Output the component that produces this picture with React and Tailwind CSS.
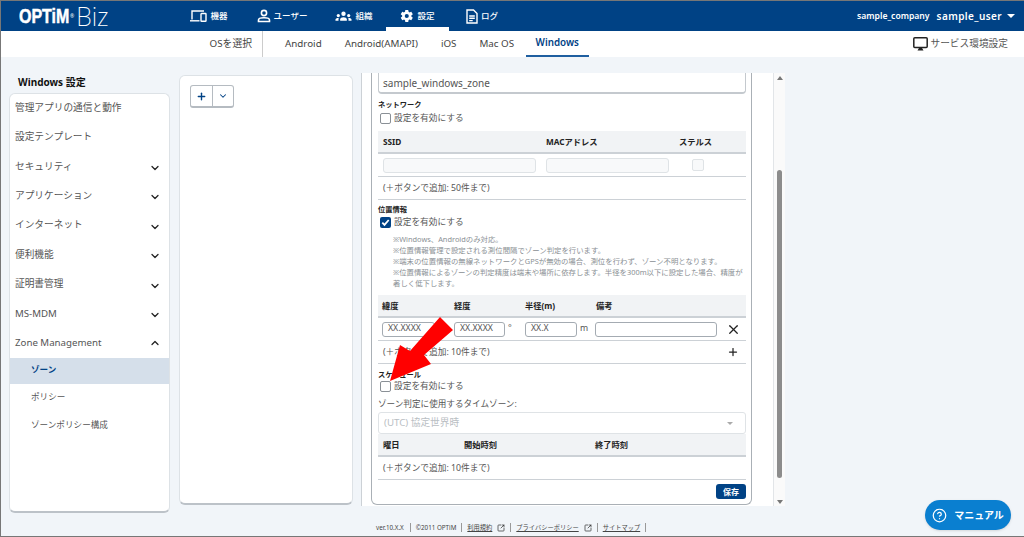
import React from "react";
import { ChevronDown, ChevronUp, Plus, X, CircleHelp, SquareArrowOutUpRight } from "lucide-react";

const font = "[font-family:'Noto_Sans','Noto_Sans_CJK_JP',sans-serif]";

function DeviceIcon() {
  return (
    <svg width="17" height="12" viewBox="0 0 17 12" fill="none" stroke="white" strokeWidth="1.4">
      <path d="M2 9.500V1H14" />
      <path d="M0 10.800H9.500" />
      <rect x="11" y="3.500" width="5" height="7.800" rx="0.6" />
    </svg>
  );
}

function UserIcon() {
  return (
    <svg width="14" height="14" viewBox="0 0 14 14" fill="none" stroke="white" strokeWidth="1.6">
      <circle cx="7" cy="4" r="2.6" />
      <path d="M1.500 12.500V11c0-1.200 2.500-2.200 5.500-2.200s5.500 1 5.500 2.200v1.500z" />
    </svg>
  );
}

function GroupIcon() {
  return (
    <svg width="17" height="11" viewBox="0 0 18 11" fill="white">
      <circle cx="9" cy="2.600" r="2.300" />
      <circle cx="3.500" cy="4.500" r="1.700" />
      <circle cx="14.500" cy="4.500" r="1.700" />
      <path d="M5.500 10V8.500c0-1.400 1.600-2.300 3.500-2.300s3.500.9 3.500 2.300V10z" />
      <path d="M0.500 10V8.800c0-.9 1.200-1.600 3-1.600l.6.100c-.3.400-.4.800-.4 1.200V10z" />
      <path d="M17.500 10V8.800c0-.9-1.200-1.600-3-1.600l-.6.100c.3.400.4.800.4 1.200V10z" />
    </svg>
  );
}

function GearIcon() {
  return (
    <svg width="14" height="14" viewBox="0 0 24 24" fill="white">
      <path d="M19.400 13c.1-.3.100-.7.100-1s0-.7-.1-1l2.200-1.700c.2-.2.200-.4.100-.6l-2.100-3.600c-.1-.2-.4-.3-.6-.2l-2.600 1c-.5-.4-1.100-.7-1.800-1l-.4-2.700c0-.2-.2-.4-.5-.4h-4.200c-.3 0-.5.200-.5.400l-.4 2.700c-.6.300-1.200.6-1.800 1l-2.600-1c-.2-.1-.5 0-.6.200L1.500 8.700c-.1.200-.1.400.1.600L3.800 11c-.1.300-.1.700-.1 1s0 .7.100 1l-2.200 1.700c-.2.200-.2.400-.1.600l2.100 3.600c.1.200.4.300.6.200l2.600-1c.5.400 1.100.7 1.800 1l.4 2.700c0 .2.200.4.500.4h4.200c.3 0 .5-.2.500-.4l.4-2.700c.6-.3 1.200-.6 1.800-1l2.600 1c.2.100.5 0 .6-.2l2.100-3.600c.1-.2.100-.4-.1-.6zM11.600 15.500a3.500 3.500 0 1 1 0-7 3.500 3.500 0 0 1 0 7z" />
    </svg>
  );
}

function LogIcon() {
  return (
    <svg width="12" height="15" viewBox="0 0 12 15" fill="none" stroke="white" strokeWidth="1.400">
      <path d="M1 1h6.500L11 4.500V14H1z" />
      <path d="M3.200 7h5.600M3.200 9.300h5.600M3.200 11.600h3.500" />
    </svg>
  );
}

function MonitorIcon() {
  return (
    <svg width="15" height="14" viewBox="0 0 15 14" fill="none">
      <rect x="0.800" y="0.800" width="13.400" height="9.700" rx="1" stroke="#222" strokeWidth="1.500" />
      <path d="M4.500 13.500 L6 11h3l1.500 2.500z" fill="#222" />
    </svg>
  );
}

function Check() {
  return (
    <span className="w-[11px] h-[11px] rounded-[2px] bg-[#004285] flex items-center justify-center">
      <svg width="9" height="9" viewBox="0 0 9 9" fill="none" stroke="white" strokeWidth="1.800">
        <path d="M1.300 4.600 3.500 6.900 7.700 2" />
      </svg>
    </span>
  );
}

function EnableCheck({ on, className }) {
  return (
    <div className={"flex shrink-0 items-center gap-[3px] pl-[2px] h-[12px] " + className}>
      {on ? <Check /> : <span className="w-[11px] h-[11px] rounded-[2px] border border-[#8a9096] bg-white"></span>}
      <span className="pt-px text-[8.700px] text-[#555]">設定を有効にする</span>
    </div>
  );
}

const nav = [
  { label: "機器", icon: <DeviceIcon />, w: "w-[66px]" },
  { label: "ユーザー", icon: <UserIcon />, w: "w-[80px]" },
  { label: "組織", icon: <GroupIcon />, w: "w-[64px]" },
  { label: "設定", icon: <GearIcon />, w: "w-[63px]", active: true },
  { label: "ログ", icon: <LogIcon />, w: "w-[66px]" },
];

const menu = [
  ["管理アプリの通信と動作"],
  ["設定テンプレート"],
  ["セキュリティ", "down"],
  ["アプリケーション", "down"],
  ["インターネット", "down"],
  ["便利機能", "down"],
  ["証明書管理", "down"],
  ["MS-MDM", "down"],
  ["Zone Management", "up"],
];

function Head({ children }) {
  return (
    <div className="h-[23px] shrink-0 pt-px bg-[#f1f3f5] border-b-2 border-[#ccd1d6] flex items-center text-[8.250px] font-bold text-[#222]">
      {children}
    </div>
  );
}

function Note({ children, plus }) {
  return (
    <div className="h-[23px] shrink-0 border-b border-[#ccd1d6] flex items-center justify-between pl-[5px] pr-[7px] text-[8.700px] text-[#555]">
      <span className="pt-px">{children}</span>
      {plus && <Plus size={12} strokeWidth={2.500} className="text-[#222]" />}
    </div>
  );
}

function Section({ children, className }) {
  return <div className={"shrink-0 text-[7.250px] font-bold text-[#222] leading-[10px] " + className}>{children}</div>;
}

function Field({ value, className }) {
  return (
    <div className={"h-[15px] rounded-[3px] border border-[#a4abb2] bg-white text-[8.700px] text-[#555] flex items-center px-[5px] " + className}>
      {value}
    </div>
  );
}

export default function App() {
  return (
    <div className={"relative w-[1024px] h-[537px] overflow-hidden bg-[#f1f5f9] border-y border-l border-[#777] flex flex-col " + font}>
      <header className="h-[30px] shrink-0 bg-[#004285] flex items-center text-white">
        <div className="w-[175px] pl-[18px] flex items-center">
          <span className="w-[51px] text-[20px] font-black leading-none scale-x-[0.8] origin-left [-webkit-text-stroke:0.5px_white] [font-family:'Liberation_Sans',sans-serif]">OPTiM</span>
          <span className="text-[5px] self-start mt-[9px]">®</span>
          <span className="ml-[2px] text-[25px] font-extralight leading-none">Biz</span>
        </div>
        <nav className="flex self-stretch">
          {nav.map((n) => (
            <div key={n.label} className={"relative flex items-center justify-center gap-[3px] text-[8.500px] font-medium " + n.w}>
              {n.icon}
              <span>{n.label}</span>
              {n.active && <span className="absolute left-0 right-0 bottom-0 h-[4px] bg-white"></span>}
            </div>
          ))}
        </nav>
        <div className="ml-auto pr-[9px] flex items-center font-semibold">
          <span className="text-[8.600px]">sample_company</span>
          <span className="ml-[7px] text-[10px] tracking-[0.4px]">sample_user</span>
          <span className="ml-[5px] w-0 h-0 border-x-[4px] border-x-transparent border-t-[4px] border-t-white"></span>
        </div>
      </header>

      <div className="h-[26px] shrink-0 bg-white flex items-stretch text-[9.800px] text-[#444]">
        <div className="w-[262px] flex items-center justify-end pr-[10px] border-r border-[#ccc]">OSを選択</div>
        <div className="flex items-stretch pl-[10.500px]">
          <span className="px-[11.500px] pt-px flex items-center">Android</span>
          <span className="px-[11.500px] pt-px flex items-center">Android(AMAPI)</span>
          <span className="px-[11.500px] pt-px flex items-center">iOS</span>
          <span className="px-[11.500px] pt-px flex items-center">Mac OS</span>
          <span className="px-[10px] pt-px flex items-center font-semibold text-[#004285] border-b-2 border-[#1f5fa0]">Windows</span>
        </div>
        <div className="ml-auto pr-[16px] flex items-center gap-[3px] text-[9.700px] text-[#555]">
          <MonitorIcon />
          <span>サービス環境設定</span>
        </div>
      </div>

      <main className="flex-1 min-h-0 flex items-start pt-[16px]">
        <aside className="ml-[8px] w-[161px]">
          <div className="pl-[9px] h-[18px] mb-[2px] flex items-center text-[10px] font-bold text-[#111]">Windows 設定</div>
          <div className="h-[420px] bg-white rounded-[6px] border border-[#dde2e6] border-b-2 border-b-[#bcc2c8]">
            <ul className="-mt-[1px]">
              {menu.map(([label, dir]) => (
                <li key={label} className="h-[29.400px] flex items-center justify-between pl-[5px] pr-[8px] text-[9.700px] text-[#555]">
                  <span className="pt-px">{label}</span>
                  {dir === "down" && <ChevronDown size={12} strokeWidth={2.500} className="text-[#222] mt-[3px]" />}
                  {dir === "up" && <ChevronUp size={12} strokeWidth={2.500} className="text-[#222]" />}
                </li>
              ))}
            </ul>
            <div className="h-[26px] bg-[#d5dfea] flex items-center pl-[21px] text-[8.600px] font-bold text-[#004285]">ゾーン</div>
            <div className="h-[28px] flex items-center pl-[21px] text-[8.600px] text-[#555]">ポリシー</div>
            <div className="h-[28px] flex items-center pl-[21px] text-[8.600px] text-[#555]">ゾーンポリシー構成</div>
          </div>
        </aside>

        <section className="ml-[9px] mt-[2px] w-[174px] h-[430px] bg-white rounded-[6px] border border-[#dde2e6] border-b-2 border-b-[#bcc2c8] px-[10px] pt-[9px]">
          <div className="w-[44px] h-[23px] rounded-[3px] border border-[#b5bbc1] border-b-2 flex">
            <div className="w-[22px] border-r border-[#b5bbc1] flex items-center justify-center">
              <Plus size={11} strokeWidth={3} className="text-[#004285]" />
            </div>
            <div className="flex-1 flex items-center justify-center">
              <ChevronDown size={10} strokeWidth={2.500} className="text-[#004285]" />
            </div>
          </div>
        </section>

        <section className="ml-[8px] w-[424px] h-[433px] bg-white border-l border-[#ccd1d6] flex">
          <div className="flex-1 pl-[9px] pr-[21px] min-w-0">
            <div className="h-[432px] rounded-b-[6px] border-x border-b border-[#aab0b6] pl-[6px] pr-[5px] flex flex-col">
              <div className="h-[21px] shrink-0 rounded-b-[4px] border-x border-b-2 border-[#c4c9ce] flex items-center pl-[4px] pt-[2px] text-[10px] text-[#555]">
                sample_windows_zone
              </div>
              <Section className="mt-[5px]">ネットワーク</Section>
              <EnableCheck className="mt-[3px]" />
              <div className="mt-[7px] shrink-0">
                <Head>
                  <span className="w-[168px] pl-[5px]">SSID</span>
                  <span className="w-[133px]">MACアドレス</span>
                  <span>ステルス</span>
                </Head>
                <div className="h-[23px] border-b border-[#ccd1d6] flex items-center pl-[5px]">
                  <div className="w-[153px] h-[15px] rounded-[3px] border border-[#dfe3e6] bg-[#f8f9fa]"></div>
                  <div className="ml-[10px] w-[123px] h-[15px] rounded-[3px] border border-[#dfe3e6] bg-[#f8f9fa]"></div>
                  <div className="ml-[23px] w-[12px] h-[12px] rounded-[2px] border border-[#dfe3e6] bg-[#f8f9fa]"></div>
                </div>
                <Note>(＋ボタンで追加: 50件まで)</Note>
              </div>
              <Section className="mt-[4px]">位置情報</Section>
              <EnableCheck on className="mt-[2px]" />
              <div className="mt-[6px] shrink-0 pl-[15px] text-[7.400px] leading-[11px] text-[#8a8f94]">
                <p>※Windows、Androidのみ対応。</p>
                <p>※位置情報管理で設定される測位間隔でゾーン判定を行います。</p>
                <p>※端末の位置情報の無線ネットワークとGPSが無効の場合、測位を行わず、ゾーン不明となります。</p>
                <p>※位置情報によるゾーンの判定精度は端末や場所に依存します。半径を300m以下に設定した場合、精度が著しく低下します。</p>
              </div>
              <div className="mt-[6px] shrink-0">
                <Head>
                  <span className="w-[76px] pl-[4px]">緯度</span>
                  <span className="w-[71px]">経度</span>
                  <span className="w-[71px]">半径(m)</span>
                  <span>備考</span>
                </Head>
                <div className="h-[23px] border-b border-[#ccd1d6] flex items-center pl-[4px] text-[8.700px] text-[#555]">
                  <Field value="XX.XXXX" className="w-[53px]" />
                  <Field value="XX.XXXX" className="ml-[19px] w-[51px]" />
                  <span className="w-[20px] pl-[3px]">°</span>
                  <Field value="XX.X" className="w-[52px]" />
                  <span className="w-[18px] pl-[3px]">m</span>
                  <Field className="w-[122px]" />
                  <X size={15} strokeWidth={2} className="ml-[8.500px] text-[#222]" />
                </div>
                <Note plus>(＋ボタンで追加: 10件まで)</Note>
              </div>
              <Section className="mt-[5px]">スケジュール</Section>
              <EnableCheck className="mt-[1px]" />
              <div className="mt-[6px] shrink-0 text-[8.600px] leading-[13px] text-[#555]">ゾーン判定に使用するタイムゾーン:</div>
              <div className="mt-[1px] h-[22px] shrink-0 rounded-[3px] border border-[#dfe3e6] flex items-center justify-between pl-[5px] pr-[12px] text-[9.700px] text-[#b9bec3]">
                <span>(UTC) 協定世界時</span>
                <span className="w-0 h-0 border-x-[3px] border-x-transparent border-t-[3px] border-t-[#aaa]"></span>
              </div>
              <Head>
                <span className="w-[86px] pl-[5px]">曜日</span>
                <span className="w-[131px]">開始時刻</span>
                <span>終了時刻</span>
              </Head>
              <Note>(＋ボタンで追加: 10件まで)</Note>
              <div className="mt-[4px] shrink-0 flex justify-end">
                <button className="w-[30px] h-[15px] rounded-[3px] bg-[#004285] text-white text-[8px] font-bold leading-none">保存</button>
              </div>
            </div>
          </div>
          <div className="w-[12px] border-l border-[#e2e5e8] bg-[#fafafa] flex flex-col items-center pt-[3px] pb-[2px]">
            <span className="w-0 h-0 border-x-[3px] border-x-transparent border-b-[4px] border-b-[#777]"></span>
            <div className="mt-[90px] w-[5px] h-[308px] rounded-full bg-[#8c8c8c]"></div>
            <span className="mt-auto w-0 h-0 border-x-[3px] border-x-transparent border-t-[4px] border-t-[#777]"></span>
          </div>
        </section>
      </main>

      <footer className="absolute left-[375px] top-[522px] flex items-center text-[6.250px] text-[#444]">
        <span className="pr-[6px] border-r border-[#999]">ver.10.X.X</span>
        <span className="px-[5px] border-r border-[#999]">©2011 OPTiM</span>
        <span className="px-[5px] flex items-center gap-[5px] border-r border-[#999]">
          <span className="underline">利用規約</span>
          <SquareArrowOutUpRight size={8} strokeWidth={2} className="text-[#222]" />
        </span>
        <span className="px-[5px] flex items-center gap-[5px] border-r border-[#999]">
          <span className="underline">プライバシーポリシー</span>
          <SquareArrowOutUpRight size={8} strokeWidth={2} className="text-[#222]" />
        </span>
        <span className="px-[5px] border-r border-[#999] underline">サイトマップ</span>
      </footer>

      <button className="absolute left-[924px] top-[499px] w-[86px] h-[30px] rounded-full bg-[#0a7fd0] shadow flex items-center justify-center gap-[7px] text-white text-[10px] font-bold">
        <CircleHelp size={15} strokeWidth={2} />
        <span>マニュアル</span>
      </button>

      <svg className="absolute left-[370px] top-[305px] pointer-events-none" width="90" height="80" viewBox="0 0 90 80">
        <path d="M19 75 L29 39 L39 45 L69 11 L82 24 L53 49 L60 58 Z" fill="#ff0000" />
      </svg>
    </div>
  );
}
